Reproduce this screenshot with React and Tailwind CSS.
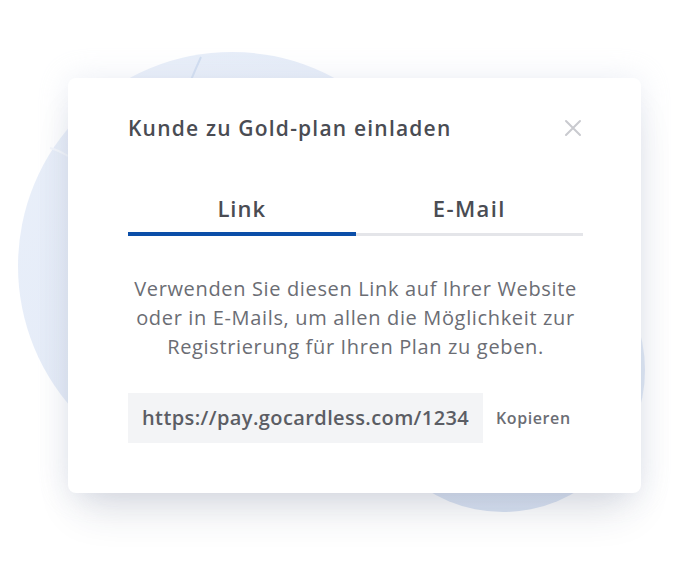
import React, { useState } from "react";

function Backdrop() {
  return (
    <svg
      className="absolute inset-0"
      width="680"
      height="580"
      viewBox="0 0 680 580"
    >
      <defs>
        <linearGradient id="g1" x1="0" y1="0" x2="1" y2="1">
          <stop offset="0" stopColor="#eaf0fa" />
          <stop offset="1" stopColor="#dfe7f5" />
        </linearGradient>
        <linearGradient id="g2" x1="0" y1="0" x2="0" y2="1">
          <stop offset="0" stopColor="#e4ebf7" />
          <stop offset="1" stopColor="#d9e3f3" />
        </linearGradient>
      </defs>
      <circle cx="232" cy="266" r="214" fill="url(#g1)" />
      <circle cx="503" cy="370" r="142" fill="url(#g2)" />
      <path d="M201 57 Q196 68 191 80" stroke="#cfdcf0" strokeWidth="2" fill="none" />
      <path d="M50 148 Q58 150 68 156" stroke="#f4f7fc" strokeWidth="2" fill="none" />
    </svg>
  );
}

export default function App() {
  const [tab, setTab] = useState("link");

  return (
    <div
      className="relative w-[680px] h-[580px] overflow-hidden bg-white"
      style={{ fontFamily: "'Open Sans', 'Noto Sans', sans-serif" }}
    >
      <Backdrop />

      <div className="relative pt-[78px] pl-[68px]">
        <div className="w-[573px] h-[415px] bg-white rounded-lg shadow-[0_26px_40px_-12px_rgba(40,50,80,0.16),0_0_30px_rgba(210,218,232,0.45)] pl-[60px] pr-[58px] pt-[36px]">
          <div className="flex items-center justify-between">
            <h2 className="text-[21px] leading-[28px] font-semibold text-[#4a4c53] tracking-[1.2px]">
              Kunde zu Gold-plan einladen
            </h2>
            <button className="w-[20px] h-[20px] flex items-center justify-center">
              <svg width="18" height="18" viewBox="0 0 18 18">
                <path
                  d="M2 2 L16 16 M16 2 L2 16"
                  stroke="#c9cacf"
                  strokeWidth="2"
                  strokeLinecap="round"
                />
              </svg>
            </button>
          </div>

          <div className="mt-[52px] flex">
            <button
              onClick={() => setTab("link")}
              className="flex-1 flex flex-col items-center"
            >
              <span className="text-[22px] leading-[28px] font-semibold text-[#4a4c53] tracking-[1px]">
                Link
              </span>
              <span
                className={
                  tab === "link"
                    ? "mt-[10px] w-full h-[4px] bg-[#0b4ea8]"
                    : "mt-[11px] w-full h-[3px] bg-[#e4e5e9]"
                }
              />
            </button>
            <button
              onClick={() => setTab("email")}
              className="flex-1 flex flex-col items-center"
            >
              <span className="text-[22px] leading-[28px] font-semibold text-[#4a4c53] tracking-[1.4px]">
                E-Mail
              </span>
              <span
                className={
                  tab === "email"
                    ? "mt-[10px] w-full h-[4px] bg-[#0b4ea8]"
                    : "mt-[11px] w-full h-[3px] bg-[#e4e5e9]"
                }
              />
            </button>
          </div>

          <p className="mt-[38px] text-center text-[20px] leading-[29px] text-[#6b6d74] tracking-[0.65px]">
            Verwenden Sie diesen Link auf Ihrer Website
            <br />
            oder in E-Mails, um allen die Möglichkeit zur
            <br />
            Registrierung für Ihren Plan zu geben.
          </p>

          <div className="mt-[32px] flex items-center">
            <div className="w-[355px] h-[50px] bg-[#f3f4f6] flex items-center pl-[14px] text-[20px] font-semibold text-[#5b5d64] tracking-[0.4px]">
              https://pay.gocardless.com/1234
            </div>
            <button className="ml-[13px] text-[16px] font-semibold text-[#6b6d74] tracking-[0.6px]">
              Kopieren
            </button>
          </div>
        </div>
      </div>
    </div>
  );
}
